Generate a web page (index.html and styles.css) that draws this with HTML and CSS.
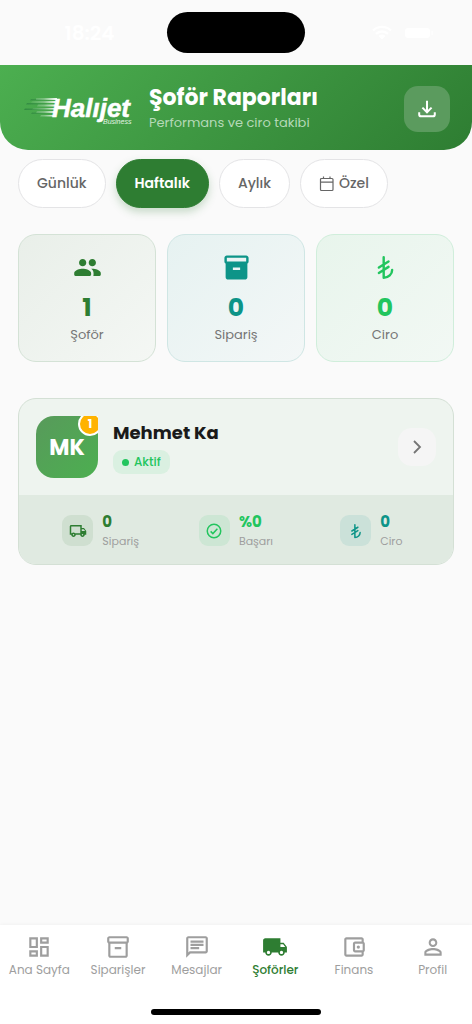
FILE: index.html
```html
<!DOCTYPE html>
<html lang="tr">
<head>
<meta charset="utf-8">
<meta name="viewport" content="width=device-width, initial-scale=1">
<title>Şoför Raporları</title>
<link rel="stylesheet" href="styles.css">
</head>
<body>
<svg class="defs" aria-hidden="true">
  <symbol id="lira" viewBox="0 0 24 24"><path d="M10.500 3.500V20.500c4 0 7-3 7-6.500M6.500 12l8-5M6.500 16.500l8-5" fill="none" stroke="currentColor" stroke-width="2" stroke-linecap="round" stroke-linejoin="round"/></symbol>
</svg>
<div class="app">
  <div class="status">
    <span class="status-time">18:24</span>
    <span class="island"></span>
    <span class="status-icons">
      <svg width="20" height="15" viewBox="0 0 20 15"><path d="M1 5.500a13 13 0 0 1 18 0M4 8.800a9 9 0 0 1 12 0" fill="none" stroke="currentColor" stroke-width="2.400"/><path d="M10 14.500 6.500 11a5 5 0 0 1 7 0z" fill="currentColor"/></svg>
      <svg width="30" height="12" viewBox="0 0 30 12"><rect x="1" y="1" width="25" height="10" rx="3" fill="currentColor"/><path d="M28 4v4" stroke="currentColor"/></svg>
    </span>
  </div>

  <header class="header">
    <svg class="logo" width="109" height="36" viewBox="0 0 109 36" role="img" aria-label="Halıjet Business">
      <defs>
        <linearGradient id="speed" x1="0" x2="1"><stop offset="0" stop-color="#fff" stop-opacity="0.050"/><stop offset="0.500" stop-color="#fff" stop-opacity="0.300"/><stop offset="1" stop-color="#fff"/></linearGradient>
        <linearGradient id="shade" x1="0" x2="1"><stop offset="0" stop-color="#1b6b38" stop-opacity="0.500"/><stop offset="1" stop-color="#1b6b38" stop-opacity="0"/></linearGradient>
      </defs>
      <path d="M7 8h22l-.5 1.500H6zM3 12h20l-.5 1.500H2zM1 17.500h24l-.5 1.500H0zM8 21.500h18l-.5 1.500H7z" fill="url(#shade)"/>
      <path d="M12 7h21l-.4 2H12zM8 10h24l-.4 2H7zM14 13.500h18l-.5 2H13zM9 17h22l-.5 1.500H8zM13 20h18l-.5 2H12zM17 24h13l-.5 1.500H16z" fill="url(#speed)"/>
      <text class="logo-name" x="28" y="26">Halıjet</text>
      <text class="logo-sub" x="79" y="33">Business</text>
    </svg>
    <div class="heading">
      <h1>Şoför Raporları</h1>
      <p>Performans ve ciro takibi</p>
    </div>
    <button class="download" aria-label="İndir">
      <svg width="22" height="22" viewBox="0 0 24 24" fill="none" stroke="currentColor" stroke-width="2.200"><path d="M12 3v12M7 10.500l5 5 5-5M3.500 15.500V18a2 2 0 0 0 2 2h13a2 2 0 0 0 2-2v-2.500"/></svg>
    </button>
  </header>

  <main>
    <div class="filters">
      <button class="chip">Günlük</button>
      <button class="chip chip-active">Haftalık</button>
      <button class="chip">Aylık</button>
      <button class="chip"><svg width="16" height="16" viewBox="0 0 16 16" fill="none" stroke="currentColor" stroke-width="1.200"><rect x="1.500" y="2.500" width="12.500" height="12" rx="1"/><path d="M1.500 6.200H14M4.500 .5v2M11 .5v2"/></svg>Özel</button>
    </div>

    <section class="stats">
      <div class="stat stat-green">
        <svg width="29" height="29" viewBox="0 0 24 24" fill="currentColor"><path d="M16 11c1.660 0 2.990-1.340 2.990-3S17.660 5 16 5s-3 1.340-3 3 1.340 3 3 3zm-8 0c1.660 0 2.990-1.340 2.990-3S9.660 5 8 5 5 6.340 5 8s1.340 3 3 3zm0 2c-2.330 0-7 1.170-7 3.500V18c0 .55.45 1 1 1h12c.55 0 1-.45 1-1v-1.500c0-2.330-4.670-3.500-7-3.500zm8 0c-.29 0-.62.02-.97.05 1.160.84 1.970 1.970 1.970 3.450V18c0 .35-.07.69-.18 1H22c.55 0 1-.45 1-1v-1.500c0-2.330-4.670-3.500-7-3.500z"/></svg>
        <strong>1</strong><span>Şoför</span>
      </div>
      <div class="stat stat-teal">
        <svg width="29" height="29" viewBox="0 0 24 24" fill="currentColor"><path d="M20 2H4c-1 0-2 .9-2 2v3.010c0 .72.43 1.340 1 1.690V20c0 1.100 1.100 2 2 2h14c.9 0 2-.9 2-2V8.700c.57-.35 1-.97 1-1.690V4c0-1.100-1-2-2-2zm-5 12H9v-2h6v2zm5-7H4V4h16v3z"/></svg>
        <strong>0</strong><span>Sipariş</span>
      </div>
      <div class="stat stat-lime">
        <svg width="29" height="29"><use href="#lira"/></svg>
        <strong>0</strong><span>Ciro</span>
      </div>
    </section>

    <article class="driver">
      <div class="driver-top">
        <div class="avatar-box">
          <div class="avatar">MK</div>
          <span class="rank">1</span>
        </div>
        <div class="driver-info">
          <h2>Mehmet Ka</h2>
          <span class="tag"><i></i>Aktif</span>
        </div>
        <button class="open" aria-label="Detay"><svg width="20" height="20" viewBox="0 0 20 20" fill="none" stroke="currentColor" stroke-width="1.800"><path d="m7 4 6 6-6 6"/></svg></button>
      </div>
      <div class="metrics">
        <div class="metric metric-green">
          <span class="metric-icon"><svg width="18" height="18" viewBox="0 0 24 24" fill="currentColor"><path d="M20 8h-3V4H3c-1.100 0-2 .9-2 2v11h2c0 1.660 1.340 3 3 3s3-1.340 3-3h6c0 1.660 1.340 3 3 3s3-1.340 3-3h2v-5l-3-4zm-.5 1.500 1.960 2.500H17V9.500h2.500zM6 18c-.55 0-1-.45-1-1s.45-1 1-1 1 .45 1 1-.45 1-1 1zm2.220-3c-.55-.61-1.330-1-2.220-1s-1.670.39-2.220 1H3V6h12v9H8.220zM18 18c-.55 0-1-.45-1-1s.45-1 1-1 1 .45 1 1-.45 1-1 1z"/></svg></span>
          <div><strong>0</strong><span>Sipariş</span></div>
        </div>
        <div class="metric metric-lime">
          <span class="metric-icon"><svg width="18" height="18" viewBox="0 0 24 24" fill="none" stroke="currentColor" stroke-width="2"><circle cx="12" cy="12" r="9"/><path d="m7.500 12.500 3 3 6-6.500"/></svg></span>
          <div><strong>%0</strong><span>Başarı</span></div>
        </div>
        <div class="metric metric-teal">
          <span class="metric-icon"><svg width="18" height="18"><use href="#lira"/></svg></span>
          <div><strong>0</strong><span>Ciro</span></div>
        </div>
      </div>
    </article>
  </main>

  <nav class="tabs">
    <a href="#"><svg viewBox="0 0 24 24"><path d="M19 5v2h-4V5h4M9 5v6H5V5h4m10 8v6h-4v-6h4M9 17v2H5v-2h4M21 3h-8v6h8V3zM11 3H3v10h8V3zm10 8h-8v10h8V11zm-10 4H3v6h8v-6z"/></svg>Ana Sayfa</a>
    <a href="#"><svg viewBox="0 0 24 24"><path d="M20 2H4c-1 0-2 .9-2 2v3.010c0 .72.43 1.340 1 1.690V20c0 1.100 1.100 2 2 2h14c.9 0 2-.9 2-2V8.700c.57-.35 1-.97 1-1.690V4c0-1.100-1-2-2-2zm-1 18H5V9h14v11zm1-13H4V4h16v3zM9 12h6v2H9z"/></svg>Siparişler</a>
    <a href="#"><svg viewBox="0 0 24 24"><path d="M4 4h16v12H5.170L4 17.170V4m0-2c-1.100 0-1.990.9-1.990 2L2 22l4-4h14c1.100 0 2-.9 2-2V4c0-1.100-.9-2-2-2H4zm2 10h8v2H6v-2zm0-3h12v2H6V9zm0-3h12v2H6V6z"/></svg>Mesajlar</a>
    <a href="#" class="current" aria-current="page"><svg viewBox="0 0 24 24"><path d="M20 8h-3V4H3c-1.100 0-2 .9-2 2v11h2c0 1.660 1.340 3 3 3s3-1.340 3-3h6c0 1.660 1.340 3 3 3s3-1.340 3-3h2v-5l-3-4zM6 18.500c-.83 0-1.500-.67-1.500-1.500s.67-1.500 1.500-1.500 1.500.67 1.500 1.500-.67 1.500-1.500 1.500zm13.500-9 1.960 2.500H17V9.500h2.500zm-1.500 9c-.83 0-1.500-.67-1.500-1.500s.67-1.500 1.500-1.500 1.500.67 1.500 1.500-.67 1.500-1.500 1.500z"/></svg>Şoförler</a>
    <a href="#"><svg viewBox="0 0 24 24"><path d="M21 7.280V5c0-1.100-.9-2-2-2H5c-1.110 0-2 .9-2 2v14c0 1.100.89 2 2 2h14c1.100 0 2-.9 2-2v-2.280c.59-.35 1-.98 1-1.720V9c0-.74-.41-1.380-1-1.720zM20 9v6h-7V9h7zM5 19V5h14v2h-6c-1.100 0-2 .9-2 2v6c0 1.100.9 2 2 2h6v2H5z"/><circle cx="16" cy="12" r="1.500"/></svg>Finans</a>
    <a href="#"><svg viewBox="0 0 24 24"><path d="M12 5.900c1.160 0 2.100.94 2.100 2.100s-.94 2.100-2.100 2.100S9.900 9.160 9.900 8s.94-2.100 2.100-2.100m0 9c2.970 0 6.100 1.460 6.100 2.100v1.100H5.900V17c0-.64 3.130-2.100 6.100-2.100M12 4C9.790 4 8 5.790 8 8s1.790 4 4 4 4-1.790 4-4-1.790-4-4-4zm0 9c-2.670 0-8 1.340-8 4v3h16v-3c0-2.660-5.330-4-8-4z"/></svg>Profil</a>
  </nav>
  <div class="home"><span></span></div>
</div>
</body>
</html>
```

FILE: styles.css
```css
* { box-sizing: border-box; }
body { margin: 0; background: #fafafa; color: #757575; font-family: Poppins, Inter, "Noto Sans", sans-serif; }
button { font: inherit; border: 0; padding: 0; cursor: pointer; }
h1, h2, p { margin: 0; }
svg { display: block; flex: none; }
.defs { position: absolute; width: 0; height: 0; }
.app { min-height: 100vh; display: flex; flex-direction: column; }

.status { display: grid; grid-template-columns: 1fr auto 1fr; justify-items: center; align-items: center; height: 65px; color: #fff; }
.status-time { font-size: 20px; font-weight: 600; padding-left: 12px; }
.island { width: 138px; height: 41px; border-radius: 21px; background: #000; }
.status-icons { display: flex; align-items: center; gap: 12px; padding-left: 28px; }

.header { display: flex; align-items: center; gap: 16px; padding: 19px 22px 16px 24px; border-radius: 0 0 28px 28px; background: linear-gradient(135deg, #4caf50, #2e7d32); color: #fff; }
.logo { overflow: visible; }
.logo-name { font: italic bold 26px "Liberation Sans", sans-serif; fill: #fff; stroke: #fff; stroke-width: 0.5px; }
.logo-sub { font: italic 7px "Liberation Sans", sans-serif; fill: #e3f4e4; }
.heading { flex: 1; }
.heading h1 { font-size: 22px; line-height: 28px; font-weight: 700; white-space: nowrap; }
.heading p { font-size: 13px; line-height: 22px; color: #b5d9b7; }
.download { display: grid; place-items: center; width: 46px; height: 46px; border-radius: 14px; background: #5b9b5e; color: #fff; }

main { flex: 1; padding: 9px 18px 0; }
.filters { display: flex; gap: 10px; }
.chip { display: flex; align-items: center; gap: 4px; height: 49px; padding: 0 18px; border: 1px solid #e4e4e6; border-radius: 25px; background: #fff; color: #666; font-size: 14px; font-weight: 500; }
.chip-active { border-color: #2e7d32; background: #2e7d32; color: #fff; font-weight: 600; box-shadow: 0 4px 9px rgba(46, 125, 50, 0.25); }

.stats { display: grid; grid-template-columns: repeat(3, 1fr); gap: 11px; margin-top: 26px; }
.stat { display: flex; flex-direction: column; align-items: center; padding: 18px 8px 16px; border: 1px solid; border-radius: 18px; }
.stat strong { margin-top: 9px; font-size: 25px; line-height: 34px; font-weight: 700; }
.stat span { font-size: 13px; line-height: 20px; color: #757575; }
.stat-green { color: #2e7d32; border-color: #d4e2d6; background: linear-gradient(135deg, #e9efe9, #f4f7f4); }
.stat-teal { color: #0d9488; border-color: #cfe6e4; background: linear-gradient(135deg, #e6f2f1, #f3f7f7); }
.stat-lime { color: #22c55e; border-color: #d0eedb; background: linear-gradient(135deg, #e8f5ec, #f2f8f4); }

.driver { margin-top: 36px; border: 1px solid #d4e0d5; border-radius: 18px; background: #eef4ef; overflow: hidden; }
.driver-top { display: flex; align-items: center; gap: 15px; padding: 17px; }
.avatar-box { position: relative; overflow: hidden; width: 62px; height: 62px; flex: none; }
.avatar { display: grid; place-items: center; height: 100%; border-radius: 18px; background: linear-gradient(135deg, #589a5b, #4caf50); color: #fff; font-size: 22px; font-weight: 700; }
.rank { position: absolute; top: -4px; right: -4px; display: grid; place-items: center; width: 24px; height: 24px; border: 2px solid #fff; border-radius: 50%; background: #ffb300; color: #fff; font-size: 12px; font-weight: 700; }
.driver-info { flex: 1; display: flex; flex-direction: column; align-items: flex-start; gap: 4px; }
.driver-info h2 { color: #1a1a1a; font-size: 18px; line-height: 26px; font-weight: 700; }
.tag { display: flex; align-items: center; gap: 5px; height: 24px; padding: 0 9px; border-radius: 9px; background: #daf0e1; color: #22c55e; font-size: 12px; font-weight: 500; }
.tag i { width: 7px; height: 7px; border-radius: 50%; background: currentColor; }
.open { display: grid; place-items: center; width: 38px; height: 38px; border-radius: 14px; background: #f5f5f5; color: #757575; }
.metrics { display: grid; grid-template-columns: repeat(3, 1fr); padding: 16px 14px 14px; background: #e0eae1; }
.metric { display: flex; align-items: center; justify-content: center; gap: 9px; }
.metric-icon { display: grid; place-items: center; width: 31px; height: 31px; border-radius: 9px; }
.metric strong, .metric div span { display: block; }
.metric strong { font-size: 15px; line-height: 21px; font-weight: 700; }
.metric div span { font-size: 11px; line-height: 18px; color: #9e9e9e; }
.metric-green { color: #2e7d32; }
.metric-green .metric-icon { background: #cfdfd0; }
.metric-lime { color: #22c55e; }
.metric-lime .metric-icon { background: #cde6d4; }
.metric-teal { color: #0d9488; }
.metric-teal .metric-icon { background: #cbe1d9; }

.tabs { display: grid; grid-template-columns: repeat(6, 1fr); padding-top: 9px; background: #fff; box-shadow: 0 -1px 3px rgba(0, 0, 0, 0.03); }
.tabs a { display: flex; flex-direction: column; align-items: center; color: #9e9e9e; font-size: 12px; line-height: 20px; text-decoration: none; white-space: nowrap; }
.tabs svg { width: 26px; height: 26px; fill: currentColor; }
.tabs .current { color: #2e7d32; font-weight: 500; }
.home { display: flex; justify-content: center; height: 44px; padding-top: 29px; background: #fff; }
.home span { width: 170px; height: 6px; border-radius: 3px; background: #000; }
```
